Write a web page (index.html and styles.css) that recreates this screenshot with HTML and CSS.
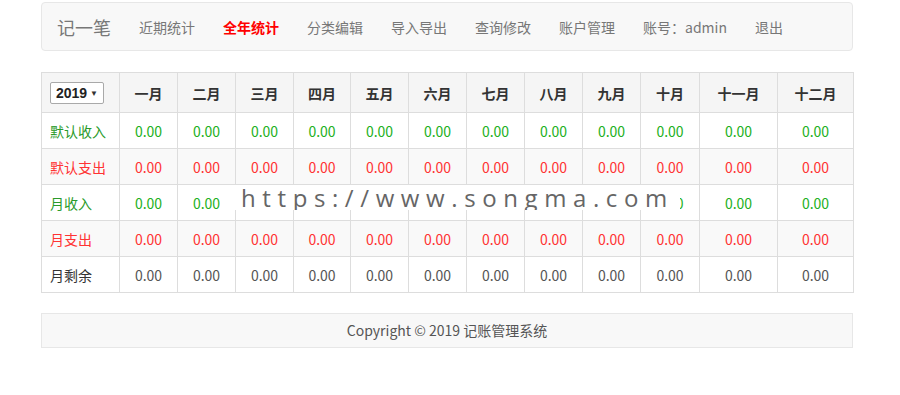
FILE: index.html
```html
<!DOCTYPE html>
<html lang="zh">
<head>
<meta charset="utf-8">
<title>记一笔 - 全年统计</title>
<link rel="stylesheet" href="styles.css">
</head>
<body>
<div class="page">
  <nav class="navbar">
    <span class="brand">记一笔</span>
    <a class="nav-item">近期统计</a>
    <a class="nav-item active">全年统计</a>
    <a class="nav-item">分类编辑</a>
    <a class="nav-item">导入导出</a>
    <a class="nav-item">查询修改</a>
    <a class="nav-item">账户管理</a>
    <a class="nav-item">账号：admin</a>
    <a class="nav-item">退出</a>
  </nav>

  <div class="table-wrap">
    <table class="stats">
      <colgroup>
        <col class="c-first"><col class="c-m"><col class="c-m"><col class="c-m"><col class="c-m57"><col class="c-m"><col class="c-m"><col class="c-m"><col class="c-m"><col class="c-m"><col class="c-m59"><col class="c-first"><col class="c-last">
      </colgroup>
      <thead>
        <tr>
          <th class="label"><span class="select">2019 <i class="caret">▼</i></span></th>
          <th>一月</th><th>二月</th><th>三月</th><th>四月</th><th>五月</th><th>六月</th><th>七月</th><th>八月</th><th>九月</th><th>十月</th><th>十一月</th><th>十二月</th>
        </tr>
      </thead>
      <tbody>
        <tr class="green">
          <td class="label">默认收入</td>
          <td>0.00</td><td>0.00</td><td>0.00</td><td>0.00</td><td>0.00</td><td>0.00</td><td>0.00</td><td>0.00</td><td>0.00</td><td>0.00</td><td>0.00</td><td>0.00</td>
        </tr>
        <tr class="red odd">
          <td class="label">默认支出</td>
          <td>0.00</td><td>0.00</td><td>0.00</td><td>0.00</td><td>0.00</td><td>0.00</td><td>0.00</td><td>0.00</td><td>0.00</td><td>0.00</td><td>0.00</td><td>0.00</td>
        </tr>
        <tr class="green">
          <td class="label">月收入</td>
          <td>0.00</td><td>0.00</td><td>0.00</td><td>0.00</td><td>0.00</td><td>0.00</td><td>0.00</td><td>0.00</td><td>0.00</td><td>0.00</td><td>0.00</td><td>0.00</td>
        </tr>
        <tr class="red odd">
          <td class="label">月支出</td>
          <td>0.00</td><td>0.00</td><td>0.00</td><td>0.00</td><td>0.00</td><td>0.00</td><td>0.00</td><td>0.00</td><td>0.00</td><td>0.00</td><td>0.00</td><td>0.00</td>
        </tr>
        <tr class="plain">
          <td class="label">月剩余</td>
          <td>0.00</td><td>0.00</td><td>0.00</td><td>0.00</td><td>0.00</td><td>0.00</td><td>0.00</td><td>0.00</td><td>0.00</td><td>0.00</td><td>0.00</td><td>0.00</td>
        </tr>
      </tbody>
    </table>
    <div class="watermark">https://www.songma.com</div>
  </div>

  <footer class="footer">Copyright © 2019 记账管理系统</footer>
</div>
</body>
</html>
```

FILE: styles.css
```css
html, body {
  margin: 0;
  padding: 0;
  background: #fff;
}

body {
  font-family: "Noto Sans CJK SC", sans-serif;
  font-size: 14px;
  color: #333;
}

.page {
  width: 812px;
  padding: 2px 0 0 41px;
}

.navbar {
  display: flex;
  align-items: center;
  height: 47px;
  background: #f8f8f8;
  border: 1px solid #e7e7e7;
  border-radius: 4px;
  padding-left: 15px;
}

.brand {
  font-size: 18px;
  color: #777;
  margin-right: 14px;
}

.nav-item {
  font-size: 14px;
  color: #777;
  padding: 0 14px;
  cursor: pointer;
}

.nav-item.active {
  color: #f00;
  font-weight: bold;
}

.table-wrap {
  position: relative;
  margin-top: 21px;
}

.stats {
  width: 812px;
  table-layout: fixed;
  border-collapse: collapse;
}

.c-first { width: 78px; }
.c-m { width: 58px; }
.c-m57 { width: 57px; }
.c-m59 { width: 59px; }
.c-last { width: 76px; }

.stats th, .stats td {
  border: 1px solid #ddd;
  text-align: center;
  padding: 0 4px;
  white-space: nowrap;
}

.stats thead tr {
  height: 40px;
  background: #f5f5f5;
}

.stats th {
  font-weight: bold;
  color: #333;
}

.stats tbody tr {
  height: 36px;
}

.stats tbody tr.odd {
  background: #f9f9f9;
}

.stats .label {
  text-align: left;
  padding-left: 8px;
}

.green td { color: #22b022; }
.green td.label { color: #2a9a2a; }
.red td { color: #ff3333; }
.red td.label { color: #f33; }
.plain td { color: #555; }
.plain td.label { color: #333; }

.select {
  display: inline-flex;
  align-items: center;
  justify-content: space-between;
  box-sizing: border-box;
  width: 54px;
  height: 22px;
  padding: 0 5px;
  background: #fff;
  border: 1px solid #a9a9a9;
  border-radius: 2px;
  font-family: "Liberation Sans", sans-serif;
  font-size: 14px;
  font-weight: bold;
  color: #222;
  vertical-align: middle;
}

.caret {
  font-style: normal;
  font-size: 8px;
  font-weight: normal;
  color: #333;
}

.watermark {
  position: absolute;
  left: 194px;
  top: 113px;
  width: 445px;
  height: 25px;
  background: #fff;
  font-family: "Open Sans", sans-serif;
  font-size: 24px;
  line-height: 25px;
  letter-spacing: 6.6px;
  color: #666;
  padding-left: 6px;
  box-sizing: border-box;
  white-space: nowrap;
  overflow: hidden;
}

.footer {
  margin-top: 20px;
  height: 33px;
  line-height: 33px;
  background: #f8f8f8;
  border: 1px solid #e7e7e7;
  text-align: center;
  font-size: 14px;
  color: #555;
}
```
